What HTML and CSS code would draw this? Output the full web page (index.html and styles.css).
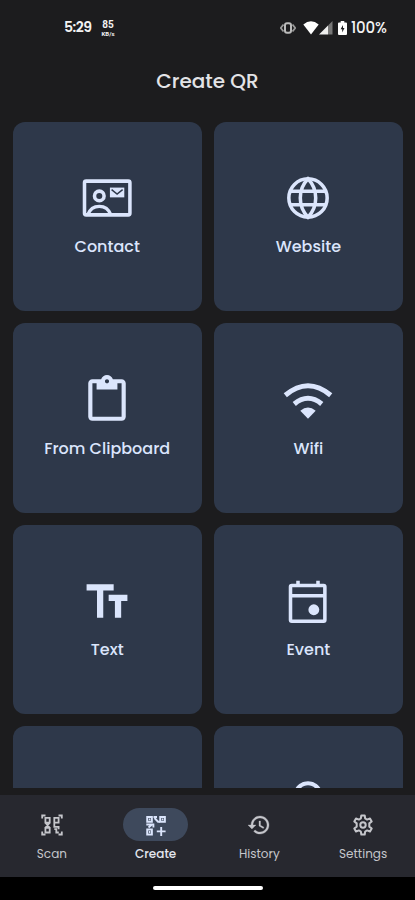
FILE: index.html
```
<!DOCTYPE html>
<html lang="en">
<head>
    <meta charset="UTF-8">
    <meta name="viewport" content="width=device-width, initial-scale=1">
    <title>Create QR</title>
    <link rel="stylesheet" href="styles.css">
</head>
<body>
<div class="phone">
    <!-- status bar -->
    <div class="status">
        <span class="time">5:29</span>
        <span class="speed"><b>85</b><small>KB/s</small></span>
        <span class="status-icons">
            <svg class="vibrate" viewBox="0 0 16 12" width="16" height="12"><path d="M3.500 2.500L.8 6l2.700 3.500M12.500 2.500L15.200 6l-2.700 3.500" fill="none" stroke="#999" stroke-width="1.800"/><rect x="5" y="1.300" width="6" height="9.400" rx="2" fill="none" stroke="#bbb" stroke-width="2"/></svg>
            <svg class="signal-wifi" viewBox="0 0 16 14" width="16" height="14"><path d="M8 13.600L.3 3.400Q8-2.800 15.700 3.400z" fill="#fff"/></svg>
            <svg class="signal-cell" viewBox="0 0 14 14" width="14" height="14"><path d="M0 13.500L9 4.500v9z" fill="#eee"/><path d="M9 4.500L13.500 0v13.500H9z" fill="#777"/></svg>
            <svg class="battery" viewBox="0 0 9 14" width="9" height="14"><path d="M2.700 0h3.600v1.500H8q1 0 1 1V13q0 1-1 1H1q-1 0-1-1V2.500q0-1 1-1h1.700z" fill="#fff"/><path d="M5 4L2.600 8.300h1.600V11.500L6.500 7H5z" fill="#1c1c1e"/></svg>
            <span class="percent">100%</span>
        </span>
    </div>
    <h1 class="title">Create QR</h1>

    <!-- types of code -->
    <div class="grid">
        <a class="card">
            <svg class="icon" viewBox="0 0 24 24"><rect x="1.200" y="3.900" width="21.800" height="16.200" rx=".8" fill="none" stroke="currentColor" stroke-width="1.700"/><circle cx="8.300" cy="11" r="2.300" fill="none" stroke="currentColor" stroke-width="1.700"/><path d="M2.800 20c1-2.700 3-4 5.500-4s4.500 1.300 5.500 4" fill="none" stroke="currentColor" stroke-width="1.600"/><path d="M13.400 7h6.900v4.700h-6.900z" fill="currentColor"/><path d="M14.200 8l2.650 2.100L19.500 8" fill="none" stroke="#2e384a" stroke-width=".7"/></svg>
            <span class="name">Contact</span>
        </a>
        <a class="card">
            <svg class="icon" viewBox="0 0 24 24" fill="none" stroke="currentColor" stroke-width="1.700"><circle cx="12" cy="12" r="9.200"/><path d="M3.500 8.800h17M3.500 15.200h17M12 2.800C9.500 5.400 8.300 8.400 8.300 12s1.200 6.600 3.700 9.200c2.500-2.600 3.700-5.600 3.700-9.200S14.500 5.400 12 2.800z"/></svg>
            <span class="name">Website</span>
        </a>
        <a class="card">
            <svg class="icon" viewBox="0 0 24 24" fill="currentColor"><path d="M19 2h-4.180C14.400.84 13.300 0 12 0c-1.300 0-2.400.84-2.820 2H5c-1.100 0-2 .9-2 2v16c0 1.100.9 2 2 2h14c1.100 0 2-.9 2-2V4c0-1.100-.9-2-2-2zm-7 0c.55 0 1 .45 1 1s-.45 1-1 1-1-.45-1-1 .45-1 1-1zm7 18H5V4h2v3h10V4h2v16z"/></svg>
            <span class="name">From Clipboard</span>
        </a>
        <a class="card">
            <svg class="icon" viewBox="0 0 24 24"><path d="M1.100 9.700Q12 .6 22.900 9.700M5.400 13.900Q12 8.400 18.600 13.900" fill="none" stroke="currentColor" stroke-width="2.400"/><path d="M12 21L8.300 17.200Q12 14 15.700 17.200z" fill="currentColor"/></svg>
            <span class="name">Wifi</span>
        </a>
        <a class="card">
            <svg class="icon" viewBox="0 0 24 24" fill="currentColor"><path d="M2.200 4v3h5v13h3V7h5V4h-13zm19.600 5h-9v3h3v8h3v-8h3V9z"/></svg>
            <span class="name">Text</span>
        </a>
        <a class="card">
            <svg class="icon" viewBox="0 0 24 24"><path d="M4.200 4.600h15.300q.6 0 .6.600v15.900q0 .6-.6.600H4.200q-.6 0-.6-.6V5.200q0-.6.600-.6zM3.600 9.500h16.500M7.200 2.300v3M16.800 2.300v3" fill="none" stroke="currentColor" stroke-width="1.700"/><circle cx="14.800" cy="16.200" r="2.600" fill="currentColor"/></svg>
            <span class="name">Event</span>
        </a>
        <a class="card"></a>
        <a class="card">
            <svg class="icon" viewBox="0 0 24 24" fill="currentColor"><path d="M12 2C8.130 2 5 5.130 5 9c0 5.250 7 13 7 13s7-7.750 7-13c0-3.870-3.130-7-7-7zm0 2c2.760 0 5 2.240 5 5 0 2.880-2.880 7.190-5 9.880C9.920 16.210 7 11.850 7 9c0-2.760 2.240-5 5-5z"/></svg>
        </a>
    </div>

    <!-- bottom tabs -->
    <nav class="tabs">
        <a class="tab">
            <span class="pill"><svg viewBox="0 0 24 24" width="24" height="24" fill="none" stroke="currentColor" stroke-width="1.800"><path d="M2.200 5.500V2.500h3.300M18.500 2.500h3.300v3M21.800 18.500v3h-3.300M5.500 21.500H2.200v-3"/><path d="M5.400 4.800h4.300v4.900H5.400zM14.300 4.800h4.300v4.900h-4.300zM5.400 14.800h4.300v4.700H5.400zM5.400 9.700l4.300 5.100M9.700 9.700l-4.300 5.100M14.300 9.700v4.200h4.300v2.300M14.300 16.200h2v3.300h2.500"/></svg></span>
            <span class="tab-name">Scan</span>
        </a>
        <a class="tab active">
            <span class="pill"><svg viewBox="0 0 24 24" width="24" height="24" fill="none" stroke="currentColor" stroke-width="1.900"><path d="M3.200 4h4.700v4.700H3.200zM16.200 4h4.700v4.700h-4.700zM3.200 16.500h4.700v5H3.200z"/><path d="M4.800 6.400h1.600M17.800 6.400h1.600M4.800 19h1.600M9.500 4h3.500M10.500 5l3.500 3.700h2M2.300 11.500h8M4.500 14.500l3-2.500M9.400 11.500v3M17.200 14v9M12.800 18.400h8.800"/></svg></span>
            <span class="tab-name">Create</span>
        </a>
        <a class="tab">
            <span class="pill"><svg viewBox="0 0 24 24" width="24" height="24" fill="currentColor" stroke="currentColor" stroke-width=".3"><path d="M13 3c-4.970 0-9 4.030-9 9H1l3.890 3.890.07.140L9 12H6c0-3.870 3.130-7 7-7s7 3.130 7 7-3.130 7-7 7c-1.930 0-3.680-.79-4.940-2.060l-1.420 1.420C8.270 19.990 10.510 21 13 21c4.970 0 9-4.030 9-9s-4.030-9-9-9zm-1 5v5l4.280 2.540.72-1.210-3.500-2.080V8H12z"/></svg></span>
            <span class="tab-name">History</span>
        </a>
        <a class="tab">
            <span class="pill"><svg viewBox="0 0 24 24" width="24" height="24" fill="none" stroke="currentColor" stroke-width="2" stroke-linejoin="round"><path d="M10.300 2.500h3.400l.5 3 1.900 1.100 2.900-1.100 1.700 3-2.400 1.900v3.200l2.400 1.900-1.700 3-2.900-1.100-1.900 1.100-.5 3h-3.400l-.5-3-1.900-1.100L5 18.500l-1.700-3 2.400-1.900v-3.200L3.300 8.500 5 5.500l2.900 1.100 1.900-1.100z"/><circle cx="12" cy="12" r="2.700"/></svg></span>
            <span class="tab-name">Settings</span>
        </a>
    </nav>
    <div class="gesture"><span class="handle"></span></div>
</div>
</body>
</html>
```
FILE: styles.css
```
*{
    margin: 0;
    padding: 0;
    box-sizing: border-box;
}
body{
    background: #1c1c1e;
    font-family: Poppins, Inter, "Liberation Sans", sans-serif;
}
.phone{
    display: flex;
    flex-direction: column;
    width: 415px;
    height: 900px;
    overflow: hidden;
    color: #e3e3e6;
}
/* status bar */
.status{
    display: flex;
    align-items: center;
    height: 56px;
    padding: 0 28px 1px 64px;
    color: #f2f2f2;
}
.time{
    width: 36px;
    font-size: 14px;
    font-weight: 600;
    letter-spacing: -.5px;
}
.speed{
    display: flex;
    flex-direction: column;
    align-items: center;
    width: 16px;
}
.speed b{
    font-family: Roboto, sans-serif;
    font-size: 10px;
    font-weight: 700;
    line-height: 11px;
}
.speed small{
    font-family: Roboto, sans-serif;
    font-size: 6px;
    font-weight: 700;
    line-height: 7px;
}
.status-icons{
    display: flex;
    align-items: center;
    margin-left: auto;
}
.signal-wifi{
    margin-left: 7px;
}
.battery{
    margin: 0 4px 0 5px;
}
.percent{
    width: 36px;
    font-size: 15px;
    font-weight: 500;
    letter-spacing: -.2px;
    white-space: nowrap;
}
.title{
    height: 66px;
    font-size: 20px;
    font-weight: 500;
    line-height: 51px;
    text-align: center;
}
/* cards */
.grid{
    display: grid;
    grid-template-columns: 1fr 1fr;
    grid-auto-rows: 189.400px;
    gap: 12px;
    height: 666px;
    padding: 0 12px 0 12.600px;
    overflow: hidden;
}
.card{
    display: flex;
    flex-direction: column;
    align-items: center;
    gap: 12px;
    padding-top: 51.200px;
    border-radius: 12px;
    background: #2e384a;
    color: #dbe5fc;
}
.icon{
    width: 50px;
    height: 50px;
}
.name{
    font-size: 16px;
    font-weight: 500;
    line-height: 24.500px;
    white-space: nowrap;
}
/* bottom tabs */
.tabs{
    display: flex;
    height: 82px;
    margin-top: 7px;
    padding-top: 13px;
    background: #27282f;
    color: #c5c6cb;
}
.tab{
    display: flex;
    flex: 1;
    flex-direction: column;
    align-items: center;
    gap: 4px;
}
.pill{
    display: flex;
    align-items: center;
    justify-content: center;
    width: 65px;
    height: 33px;
    border-radius: 17px;
}
.tab-name{
    font-size: 12px;
    line-height: 17px;
}
.active{
    color: #e3e6ee;
}
.active .tab-name{
    font-weight: 500;
}
.active .pill{
    background: #3e495c;
    color: #dbe5fc;
}
.gesture{
    display: flex;
    justify-content: center;
    height: 23px;
    padding-top: 9px;
    background: #000;
}
.handle{
    width: 110px;
    height: 4px;
    border-radius: 2px;
    background: #fff;
}
```
